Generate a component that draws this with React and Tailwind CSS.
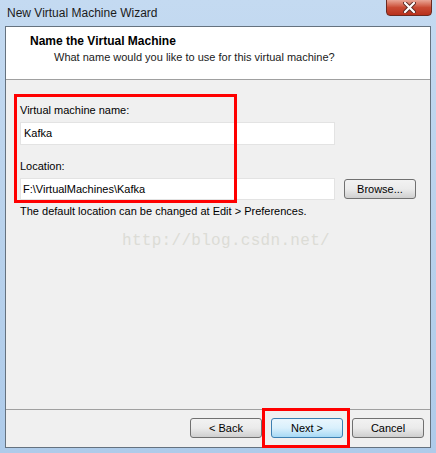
export default function App() {
  const ui = { fontFamily: '"Liberation Sans", Arial, sans-serif' };
  const btn = 'w-[72px] h-[20px] rounded-[3px] border border-[#707070] bg-gradient-to-b from-[#f2f2f2] via-[#ebebeb] to-[#cfcfcf] text-[11px]';

  return (
    <div
      className="relative w-[436px] h-[453px] flex flex-col bg-gradient-to-b from-[#c4daf1] via-[#b9d2ec] to-[#aecbea] text-[11px] text-black"
      style={ui}
    >
      {/* title bar */}
      <div className="h-[26px] flex items-start justify-between pl-[7px] pr-[4px]">
        <div className="pt-[4px] text-[12px] text-[#1b1b1b]">New Virtual Machine Wizard</div>
        <button className="w-[46px] h-[17px] mt-[-1px] rounded-b-[4px] border border-[#6b2a20] bg-gradient-to-b from-[#e9a596] via-[#c94a33] to-[#b8301c] flex items-center justify-center">
          <svg width="13" height="11" viewBox="0 0 13 11">
            <path d="M2 1 L11 10 M11 1 L2 10" stroke="#5a2a24" strokeWidth="4" strokeLinecap="round" />
            <path d="M2 1 L11 10 M11 1 L2 10" stroke="#ffffff" strokeWidth="2.2" strokeLinecap="round" />
          </svg>
        </button>
      </div>

      {/* client area */}
      <div className="mx-[5px] mb-[5px] flex-1 flex flex-col border border-[#65727f] bg-[#f0f0f0]">
        <div className="h-[53px] bg-white border-b border-[#a0a0a0] pl-[24px] pt-[7px] leading-[14px]">
          <div className="font-bold text-[12px] leading-[15px]">Name the Virtual Machine</div>
          <div className="pl-[24px] mt-[1px] text-[#1a1a1a]">What name would you like to use for this virtual machine?</div>
        </div>

        <div className="flex-1 flex flex-col px-[14px] pt-[23px]">
          <div className="leading-[14px]">Virtual machine name:</div>
          <div className="mt-[5px] w-[315px] h-[23px] bg-white border border-[#e3e3e3] px-[3px] flex items-center">Kafka</div>

          <div className="mt-[14px] leading-[14px]">Location:</div>
          <div className="mt-[5px] flex items-center gap-[9px]">
            <div className="w-[315px] h-[22px] bg-white border border-[#e3e3e3] px-[2px] flex items-center">F:\VirtualMachines\Kafka</div>
            <button className={btn}>Browse...</button>
          </div>
          <div className="mt-[4px] leading-[14px]">The default location can be changed at Edit &gt; Preferences.</div>

          <div
            className="mt-[11px] ml-[102px] text-[16px] text-[#dcdcd6] tracking-[0.3px]"
            style={{ fontFamily: '"Liberation Mono", "DejaVu Sans Mono", monospace' }}
          >
            http://blog.csdn.net/
          </div>
        </div>

        <div className="h-[38px] border-t border-[#a0a0a0] flex items-start justify-end gap-[9px] pr-[6px] pt-[8px]">
          <button className={btn}>&lt; Back</button>
          <button className="w-[72px] h-[20px] rounded-[3px] border border-[#3c7fb1] bg-gradient-to-b from-[#eaf6fd] via-[#d9f0fc] to-[#a7d9f5] text-[11px]">Next &gt;</button>
          <button className={btn}>Cancel</button>
        </div>
      </div>

      {/* annotation overlays */}
      <div className="absolute left-[14px] top-[94px] w-[223px] h-[109px] border-[3px] border-[#ff0000]" />
      <div className="absolute left-[262px] top-[408px] w-[88px] h-[40px] border-[3px] border-[#ff0000]" />
    </div>
  );
}
